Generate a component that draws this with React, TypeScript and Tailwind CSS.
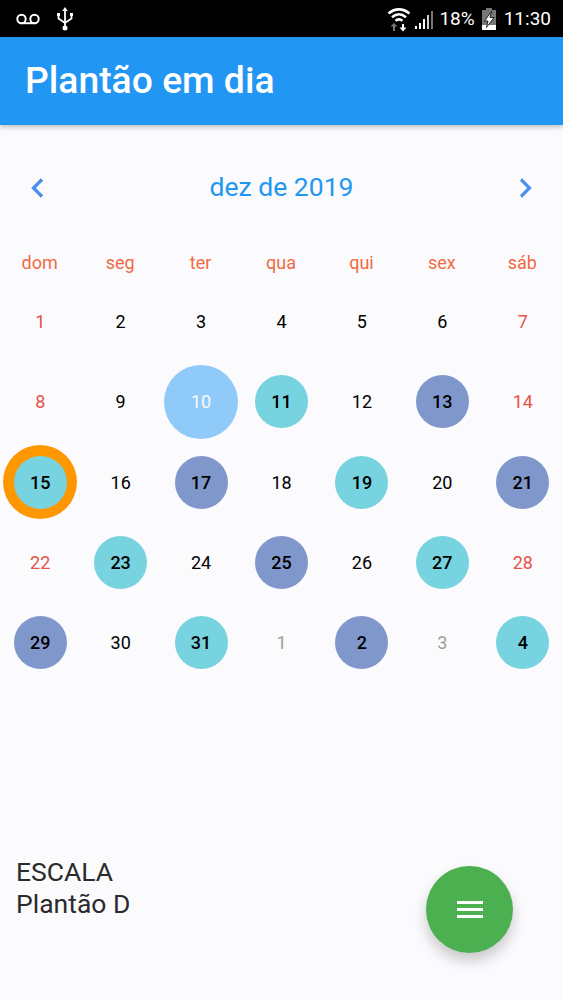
const weekDays = ['dom', 'seg', 'ter', 'qua', 'qui', 'sex', 'sáb'];

type Kind = 'plain' | 'teal' | 'indigo' | 'selected' | 'today';
type Day = { n: number; kind?: Kind; muted?: boolean };

const days: Day[] = [
  { n: 1 }, { n: 2 }, { n: 3 }, { n: 4 }, { n: 5 }, { n: 6 }, { n: 7 },
  { n: 8 }, { n: 9 }, { n: 10, kind: 'selected' }, { n: 11, kind: 'teal' }, { n: 12 }, { n: 13, kind: 'indigo' }, { n: 14 },
  { n: 15, kind: 'today' }, { n: 16 }, { n: 17, kind: 'indigo' }, { n: 18 }, { n: 19, kind: 'teal' }, { n: 20 }, { n: 21, kind: 'indigo' },
  { n: 22 }, { n: 23, kind: 'teal' }, { n: 24 }, { n: 25, kind: 'indigo' }, { n: 26 }, { n: 27, kind: 'teal' }, { n: 28 },
  { n: 29, kind: 'indigo' }, { n: 30 }, { n: 31, kind: 'teal' }, { n: 1, muted: true }, { n: 2, kind: 'indigo' }, { n: 3, muted: true }, { n: 4, kind: 'teal' },
];

function StatusBar() {
  return (
    <div className="h-[37px] bg-black flex items-center justify-between pl-4 pr-3 text-white">
      <div className="flex items-center gap-[16px]">
        {/* voicemail */}
        <svg width="24" height="12" viewBox="0 0 24 12" fill="none" stroke="white" strokeWidth="2">
          <circle cx="5.5" cy="6" r="4.2" />
          <circle cx="18.5" cy="6" r="4.2" />
          <path d="M5.5 10.2h13" />
        </svg>
        {/* usb */}
        <svg width="18" height="24" viewBox="0 0 18 24" fill="none" stroke="white" strokeWidth="1.800">
          <path d="M9 3v18" />
          <path d="M2.500 8v3.500L9 16l6.500-4.500V8" />
          <path d="M9 0l2.800 4H6.200z" fill="white" stroke="none" />
          <circle cx="9" cy="21" r="2.500" fill="white" stroke="none" />
          <rect x="1" y="6" width="3" height="3" fill="white" stroke="none" />
          <rect x="14" y="6" width="3" height="3" fill="white" stroke="none" />
        </svg>
      </div>
      <div className="flex items-center">
        {/* wifi with arrows */}
        <svg width="24" height="26" viewBox="0 0 24 26" fill="none" stroke="white" className="mr-[3px]">
          <path d="M1.500 7.500C8 2 16 2 22.500 7.500" strokeWidth="2.600" />
          <path d="M5 11.200c4.400-3.700 9.600-3.700 14 0" strokeWidth="2.600" />
          <path d="M8.500 14.800c2.300-1.900 4.700-1.900 7 0" strokeWidth="2.600" />
          <path d="M7 25v-5" stroke="#777" strokeWidth="2" />
          <path d="M3.500 20.500L7 17l3.500 3.500z" fill="#777" stroke="none" />
          <path d="M16 18v4" strokeWidth="2" />
          <path d="M12.500 21.500h7L16 25.500z" fill="white" stroke="none" />
        </svg>
        {/* signal */}
        <svg width="20" height="22" viewBox="0 0 20 22" fill="white" className="mr-[5px]">
          <rect x="1" y="18" width="2" height="3" />
          <rect x="5" y="15" width="2" height="6" />
          <rect x="9" y="11" width="2" height="10" />
          <rect x="13" y="7" width="2" height="14" fill="#cfcfcf" />
          <rect x="17" y="3" width="2" height="18" fill="#777" />
        </svg>
        <span className="text-[19px] leading-none font-['Roboto',sans-serif] mr-[6px]">18%</span>
        {/* battery charging */}
        <svg width="16" height="22" viewBox="0 0 16 22" className="mr-[7px]">
          <path d="M5 0h6v2h4v20H1V2h4z" fill="#777" />
          <path d="M1 17h14v5H1z" fill="white" />
          <path d="M10.500 3.500L3.500 13H7l-1.500 6.500L13 9.500H9z" fill="white" stroke="black" strokeWidth="0.8" />
        </svg>
        <span className="text-[19px] leading-none font-['Roboto',sans-serif]">11:30</span>
      </div>
    </div>
  );
}

function DayCell({ day, index }: { day: Day; index: number }) {
  const weekend = index % 7 === 0 || index % 7 === 6;
  const kind = day.kind ?? 'plain';

  if (kind === 'selected') {
    return (
      <div className="h-[80.43px] flex items-center justify-center">
        <div className="w-[74px] h-[74px] rounded-full bg-[#90CAF9] text-[#FAFAFA] flex items-center justify-center">{day.n}</div>
      </div>
    );
  }
  if (kind === 'today') {
    return (
      <div className="h-[80.43px] flex items-center justify-center">
        <div className="w-[74px] h-[74px] rounded-full bg-[#FF9800] flex items-center justify-center">
          <div className="w-[53px] h-[53px] rounded-full bg-[#76D3DF] text-black font-medium flex items-center justify-center">{day.n}</div>
        </div>
      </div>
    );
  }
  if (kind === 'teal' || kind === 'indigo') {
    return (
      <div className="h-[80.43px] flex items-center justify-center">
        <div className={`w-[53px] h-[53px] rounded-full text-black font-medium flex items-center justify-center ${kind === 'teal' ? 'bg-[#76D3DF]' : 'bg-[#7F97CB]'}`}>
          {day.n}
        </div>
      </div>
    );
  }
  const color = day.muted ? 'text-[#9E9E9E]' : weekend ? 'text-[#E5534B]' : 'text-black';
  return <div className={`h-[80.43px] flex items-center justify-center ${color}`}>{day.n}</div>;
}

export default function App() {
  return (
    <div className="relative w-[563px] h-[1000px] overflow-hidden bg-[#FBFAFD] font-['Roboto',sans-serif]">
      <StatusBar />

      <header className="h-[88px] bg-[#2196F3] flex items-center px-[25px] shadow-[0_2px_5px_rgba(0,0,0,0.25)]">
        <h1 className="text-[37.3px] leading-none font-medium text-white">Plantão em dia</h1>
      </header>

      {/* Month header */}
      <div className="h-[118px] pl-[26px] pr-[33px] pt-[7px] flex items-center justify-between">
        <svg width="24" height="24" viewBox="0 0 24 24" fill="none" stroke="#4A8FEF" strokeWidth="3.200">
          <path d="M16 3.500L7.500 12l8.500 8.500" />
        </svg>
        <span className="text-[26.5px] text-[#2196F3] -mt-[2px]">dez de 2019</span>
        <svg width="24" height="24" viewBox="0 0 24 24" fill="none" stroke="#4A8FEF" strokeWidth="3.200" className="-mr-[7px]">
          <path d="M8 3.500l8.500 8.500L8 20.500" />
        </svg>
      </div>

      {/* Weekdays */}
      <div className="grid grid-cols-7 h-[38px] pt-[1px] text-[18px] text-[#EF6A42] text-center">
        {weekDays.map((d) => (
          <div key={d} className="leading-[38px] -translate-x-[0.5px]">{d}</div>
        ))}
      </div>

      {/* Days */}
      <div className="grid grid-cols-7 text-[18px]">
        {days.map((d, i) => (
          <DayCell key={i} day={d} index={i} />
        ))}
      </div>

      <div className="mt-[173px] pl-4 text-[26.5px] leading-[32px] text-[#2B2B2B]">
        <div>ESCALA</div>
        <div>Plantão D</div>
      </div>

      <button className="absolute left-[426px] top-[866px] w-[87px] h-[87px] rounded-full bg-[#4CAF50] flex flex-col items-center justify-center gap-[4px] shadow-[0_8px_14px_rgba(0,0,0,0.2)]">
        <span className="block w-[26px] h-[3px] bg-white" />
        <span className="block w-[26px] h-[3px] bg-white" />
        <span className="block w-[26px] h-[3px] bg-white" />
      </button>
    </div>
  );
}
